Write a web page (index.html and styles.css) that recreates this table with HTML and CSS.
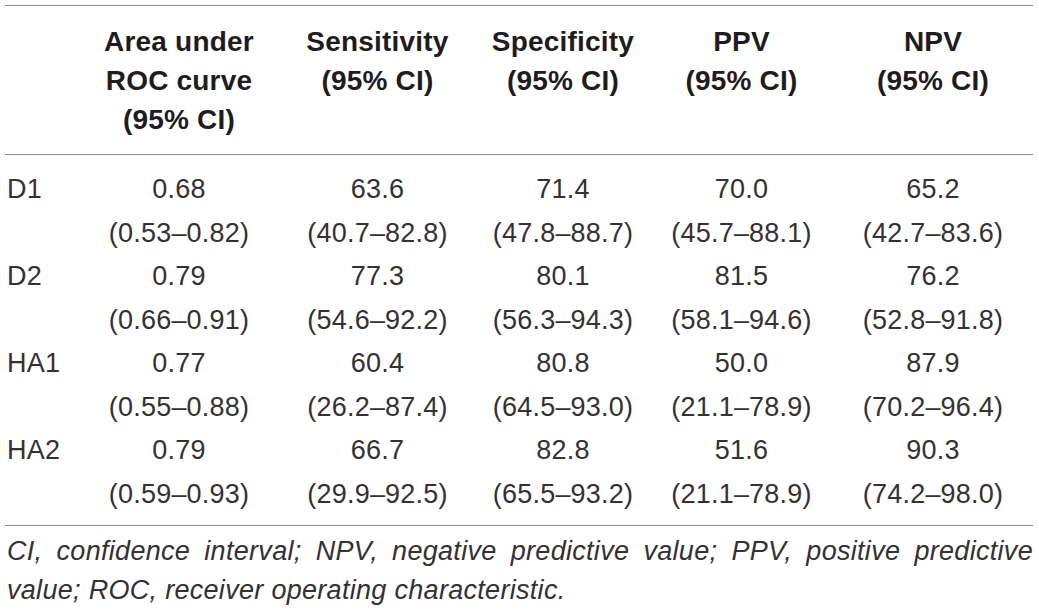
FILE: index.html
```html
<!DOCTYPE html>
<html lang="en">
<head>
<meta charset="utf-8">
<title>Diagnostic performance</title>
<link rel="stylesheet" href="styles.css">
</head>
<body>
<div class="wrap">
  <table class="results">
    <colgroup>
      <col class="c-label">
      <col class="c-auc">
      <col class="c-sens">
      <col class="c-spec">
      <col class="c-ppv">
      <col class="c-npv">
    </colgroup>
    <thead>
      <tr>
        <th class="label"></th>
        <th>Area under<br>ROC curve<br>(95% CI)</th>
        <th>Sensitivity<br>(95% CI)</th>
        <th>Specificity<br>(95% CI)</th>
        <th>PPV<br>(95% CI)</th>
        <th>NPV<br>(95% CI)</th>
      </tr>
    </thead>
    <tbody>
      <tr>
        <td class="label">D1</td>
        <td>0.68<br>(0.53–0.82)</td>
        <td>63.6<br>(40.7–82.8)</td>
        <td>71.4<br>(47.8–88.7)</td>
        <td>70.0<br>(45.7–88.1)</td>
        <td>65.2<br>(42.7–83.6)</td>
      </tr>
      <tr>
        <td class="label">D2</td>
        <td>0.79<br>(0.66–0.91)</td>
        <td>77.3<br>(54.6–92.2)</td>
        <td>80.1<br>(56.3–94.3)</td>
        <td>81.5<br>(58.1–94.6)</td>
        <td>76.2<br>(52.8–91.8)</td>
      </tr>
      <tr>
        <td class="label">HA1</td>
        <td>0.77<br>(0.55–0.88)</td>
        <td>60.4<br>(26.2–87.4)</td>
        <td>80.8<br>(64.5–93.0)</td>
        <td>50.0<br>(21.1–78.9)</td>
        <td>87.9<br>(70.2–96.4)</td>
      </tr>
      <tr>
        <td class="label">HA2</td>
        <td>0.79<br>(0.59–0.93)</td>
        <td>66.7<br>(29.9–92.5)</td>
        <td>82.8<br>(65.5–93.2)</td>
        <td>51.6<br>(21.1–78.9)</td>
        <td>90.3<br>(74.2–98.0)</td>
      </tr>
    </tbody>
  </table>
  <p class="note">CI, confidence interval; NPV, negative predictive value; PPV, positive predictive value; ROC, receiver operating characteristic.</p>
</div>
</body>
</html>
```

FILE: styles.css
```css
html, body {
  margin: 0;
  padding: 0;
  background: #ffffff;
}

body {
  font-family: "Liberation Sans", Arial, sans-serif;
  color: #231f20;
}

.wrap {
  padding: 5px 6px 0 5px;
  width: 1028px;
}

.results {
  width: 1028px;
  table-layout: fixed;
  border-collapse: collapse;
  border-top: 1px solid #8a8a8a;
  border-bottom: 1px solid #8a8a8a;
}

.c-label { width: 74px; }
.c-auc { width: 200px; }
.c-sens { width: 197px; }
.c-spec { width: 174px; }
.c-ppv { width: 183px; }
.c-npv { width: 200px; }

.results th {
  font-size: 28px;
  font-weight: bold;
  letter-spacing: 0.2px;
  line-height: 39px;
  text-align: center;
  vertical-align: top;
  padding: 16px 0 15px;
  border-bottom: 1px solid #8a8a8a;
  color: #1f1c1d;
}

.results td {
  font-size: 27px;
  font-weight: normal;
  letter-spacing: 0.2px;
  line-height: 43.5px;
  text-align: center;
  vertical-align: top;
  padding: 0;
  color: #343132;
}

.results tbody tr:first-child td {
  padding-top: 13px;
}

.results tbody tr:last-child td {
  padding-bottom: 9px;
}

.results .label {
  text-align: left;
  padding-left: 2px;
}

.note {
  margin: 6px 0 0;
  padding-left: 2px;
  font-size: 27px;
  font-style: italic;
  letter-spacing: 0.3px;
  line-height: 38.5px;
  text-align: justify;
  color: #343132;
}
```
